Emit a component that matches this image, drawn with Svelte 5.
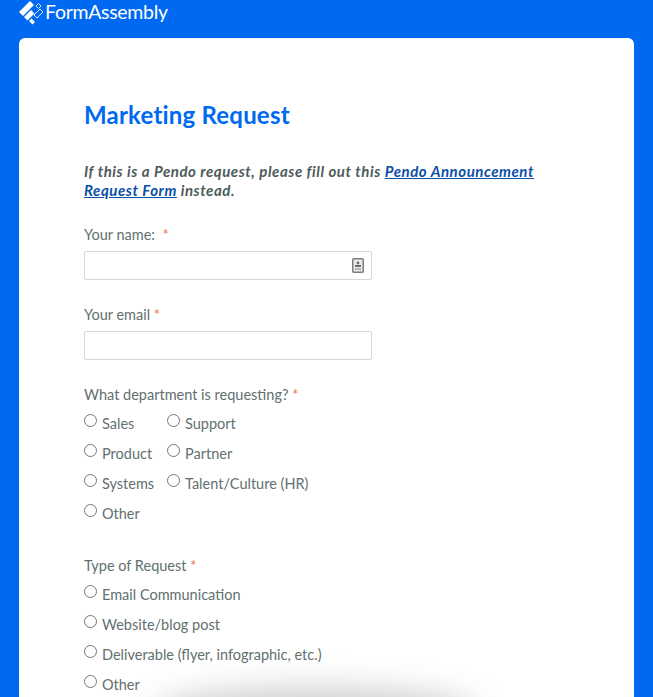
<script>
  const departments = ['Sales', 'Support', 'Product', 'Partner', 'Systems', 'Talent/Culture (HR)', 'Other'];
  const requestTypes = ['Email Communication', 'Website/blog post', 'Deliverable (flyer, infographic, etc.)', 'Other'];
</script>

<div class="page">
  <header class="brand">
    <svg class="logo" width="25" height="25" viewBox="0 0 25 25" aria-hidden="true">
      <g fill="#fff">
        <path d="M0 12 L11 1 L15 5 L4 16 Z" />
        <path d="M5 17 L12 10 L15.5 13.5 L8.5 20.5 Z" />
        <path d="M10 21 L12.5 18.5 L16 22 L13.5 24.5 Z" />
      </g>
      <g fill="none" stroke="#fff" stroke-width="1" opacity="0.85">
        <path d="M17 6 L19.5 3.5 L22 6 L19.5 8.5 Z" />
        <path d="M15 15 L21 9 L24 12 L18 18 Z" />
      </g>
    </svg>
    <span class="wordmark">FormAssembly</span>
  </header>

  <main class="card">
    <h1>Marketing Request</h1>
    <p class="note">
      If this is a Pendo request, please fill out this <a href="#pendo">Pendo Announcement Request Form</a> instead.
    </p>

    <div class="field">
      <label for="name">Your name:&nbsp; <span class="req">*</span></label>
      <div class="input-wrap">
        <input id="name" type="text" />
        <svg class="contact-icon" width="12" height="15" viewBox="0 0 12 15" aria-hidden="true">
          <rect x="0.75" y="0.75" width="10.5" height="13.5" rx="1" fill="#e9e9e9" stroke="#7d7d7d" stroke-width="1.5" />
          <circle cx="6" cy="5" r="1.4" fill="#6f6f6f" />
          <rect x="3" y="7" width="6" height="2" fill="#6f6f6f" />
          <rect x="3" y="10" width="6" height="2" fill="#b5b5b5" />
        </svg>
      </div>
    </div>

    <div class="field">
      <label for="email">Your email <span class="req">*</span></label>
      <input id="email" type="text" />
    </div>

    <fieldset class="dept">
      <legend>What department is requesting? <span class="req">*</span></legend>
      <div class="dept-grid">
        {#each departments as d}
          <label class="radio"><input type="radio" name="dept" /><span>{d}</span></label>
        {/each}
      </div>
    </fieldset>

    <fieldset class="type">
      <legend>Type of Request <span class="req">*</span></legend>
      {#each requestTypes as t}
        <label class="radio"><input type="radio" name="type" /><span>{t}</span></label>
      {/each}
    </fieldset>
  </main>

  <div class="bottom-shadow"></div>
</div>

<style>
  :global(body) {
    margin: 0;
    background: #0069f2;
  }
  .page {
    position: relative;
    height: 697px;
    overflow: hidden;
    background: #0069f2;
    font-family: Lato, "Open Sans", sans-serif;
    color: #627070;
    font-size: 14.5px;
  }
  .brand {
    display: flex;
    align-items: flex-start;
    gap: 1px;
    height: 38px;
    padding: 0 0 0 19px;
    box-sizing: border-box;
    color: #fff;
  }
  .wordmark {
    font-size: 19.5px;
    letter-spacing: -0.3px;
    line-height: 24px;
  }
  .card {
    margin: 0 19px;
    height: 680px;
    padding: 62px 65px 0;
    box-sizing: border-box;
    background: #fff;
    border-radius: 6px;
  }
  h1 {
    margin: 0;
    font-size: 24px;
    line-height: 30px;
    font-weight: 700;
    color: #0069f2;
    letter-spacing: 0.2px;
  }
  .note {
    margin: 32px 0 0;
    width: 470px;
    font-size: 15px;
    line-height: 19px;
    font-weight: 700;
    font-style: italic;
    letter-spacing: 0.55px;
    color: #4d5b5b;
  }
  .note a {
    color: #0a4fa8;
  }
  .field {
    margin-top: 25px;
  }
  .field label {
    display: block;
    height: 19px;
    line-height: 19px;
    margin-bottom: 7px;
  }
  .req {
    color: #f2704d;
  }
  .input-wrap {
    position: relative;
    width: 288px;
  }
  input[type='text'] {
    display: block;
    width: 288px;
    height: 29px;
    box-sizing: border-box;
    margin: 0;
    padding: 0 8px;
    background: #fff;
    border: 1px solid #d5d8e0;
    border-radius: 2px;
  }
  .contact-icon {
    position: absolute;
    right: 8px;
    top: 7px;
  }
  fieldset {
    margin: 0;
    padding: 0;
    border: 0;
  }
  legend {
    padding: 0;
    height: 19px;
    line-height: 19px;
  }
  .dept {
    margin-top: 25px;
  }
  .dept legend {
    margin-bottom: 7px;
  }
  .dept-grid {
    display: grid;
    grid-template-columns: 83px auto;
    justify-content: start;
  }
  .type {
    margin-top: 25px;
  }
  .type legend {
    margin-bottom: 7px;
  }
  .radio {
    display: flex;
    align-items: flex-start;
    gap: 5px;
    height: 30px;
  }
  .radio input {
    width: 13px;
    height: 13px;
    margin: 3px 0 0;
    flex: none;
  }
  .radio span {
    line-height: 19px;
    padding-top: 3px;
  }
  .bottom-shadow {
    position: absolute;
    left: 170px;
    width: 290px;
    top: 704px;
    height: 20px;
    border-radius: 50%;
    background: #8f8f8f;
    box-shadow: 0 0 30px 16px #a0a0a0;
    opacity: 0.5;
  }
</style>
